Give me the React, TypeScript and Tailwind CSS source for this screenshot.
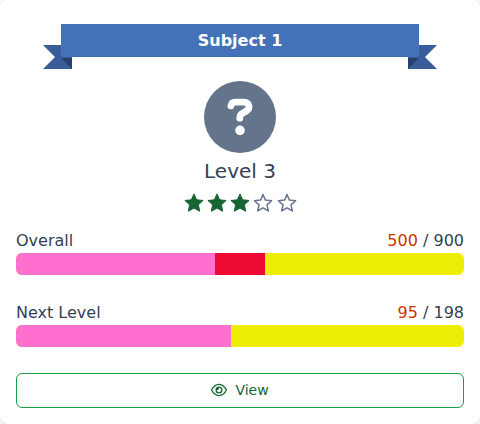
import { FaRegEye } from "react-icons/fa6";

type Segment = { width: string; color: string };

function QuestionIcon() {
  return (
    <svg width="28" height="40" viewBox="0 0 28 40" fill="none">
      <path
        d="M4.9 8.8Q5.6 5.1 9.3 5.1H17.5C23.2 5.1 25 11 20.3 14L15.6 16.8Q13.8 18 13.8 21.2"
        stroke="currentColor"
        strokeWidth="6.8"
        strokeLinecap="round"
        strokeLinejoin="round"
      />
      <circle cx="14" cy="33.4" r="4.8" fill="currentColor" />
    </svg>
  );
}

function Star({ filled }: { filled: boolean }) {
  return filled ? (
    <svg className="h-5 w-5 text-[#166534]" viewBox="0 0 20 20">
      <path
        d="M10 .9L12.7 6.8L19.1 7.5L14.4 11.8L15.7 18.3L10 15.1L4.3 18.3L5.6 11.8L.9 7.5L7.3 6.8Z"
        fill="currentColor"
        stroke="currentColor"
        strokeWidth="1"
        strokeLinejoin="round"
      />
    </svg>
  ) : (
    <svg className="h-5 w-5 text-[#64748b]" viewBox="0 0 20 20">
      <path
        d="M10 1.5L12.4 7.1L18.6 7.8L14 11.9L15.3 17.9L10 14.8L4.7 17.9L6 11.9L1.4 7.8L7.6 7.1Z"
        fill="none"
        stroke="currentColor"
        strokeWidth="1.5"
        strokeLinejoin="round"
      />
    </svg>
  );
}

function Ribbon({ title }: { title: string }) {
  return (
    <div className="relative mx-[45px] h-[33px]">
      <svg className="absolute -left-[18px] top-[21px]" width="29" height="24" viewBox="0 0 29 24">
        <path d="M0 0H29V24H0L12 12Z" fill="#385d98" />
        <path d="M18 13H29V24Z" fill="#28426e" />
      </svg>
      <svg className="absolute -right-[18px] top-[21px]" width="29" height="24" viewBox="0 0 29 24">
        <path d="M29 0H0V24H29L17 12Z" fill="#385d98" />
        <path d="M11 13H0V24Z" fill="#28426e" />
      </svg>
      <h2 className="relative flex h-[33px] items-center justify-center bg-[#4472b9] text-base font-bold text-white">
        {title}
      </h2>
    </div>
  );
}

function Progress({ label, value, total, segments }: { label: string; value: number; total: number; segments: Segment[] }) {
  return (
    <div>
      <div className="flex justify-between text-base leading-6">
        <span>{label}</span>
        <span>
          <span className="text-[#ca3500]">{value}</span> / {total}
        </span>
      </div>
      <div className="flex h-[22px] overflow-hidden rounded-md bg-[#eded05]">
        {segments.map((s) => (
          <div key={s.color} className={s.color} style={{ width: s.width }} />
        ))}
      </div>
    </div>
  );
}

export default function App() {
  return (
    <div className="h-[424px] bg-[#f8f8f8] font-['DejaVu_Sans',sans-serif] text-[#334155]">
      <div className="flex h-[424px] flex-col rounded-lg bg-white px-4 pt-6 shadow-sm">
        <Ribbon title="Subject 1" />
        <div className="mt-6 flex h-[72px] w-[72px] items-center justify-center self-center rounded-full bg-[#64748b] text-white">
          <QuestionIcon />
        </div>
        <div className="mt-1 text-center text-xl leading-7">Level 3</div>
        <div className="mt-2 flex justify-center gap-[3.25px]">
          {[1, 2, 3, 4, 5].map((n) => (
            <Star key={n} filled={n <= 3} />
          ))}
        </div>
        <div className="mt-4 flex flex-col gap-[26px]">
          <Progress
            label="Overall"
            value={500}
            total={900}
            segments={[
              { width: "199px", color: "bg-[#ff6fd0]" },
              { width: "50px", color: "bg-[#ee0a34]" },
            ]}
          />
          <Progress label="Next Level" value={95} total={198} segments={[{ width: "215px", color: "bg-[#ff6fd0]" }]} />
        </div>
        <button className="mt-[26px] flex h-[35px] items-center justify-center gap-2 rounded-md border border-[#16a34a] pb-px text-sm text-[#166534]">
          <FaRegEye className="h-4 w-4" />
          View
        </button>
      </div>
    </div>
  );
}
